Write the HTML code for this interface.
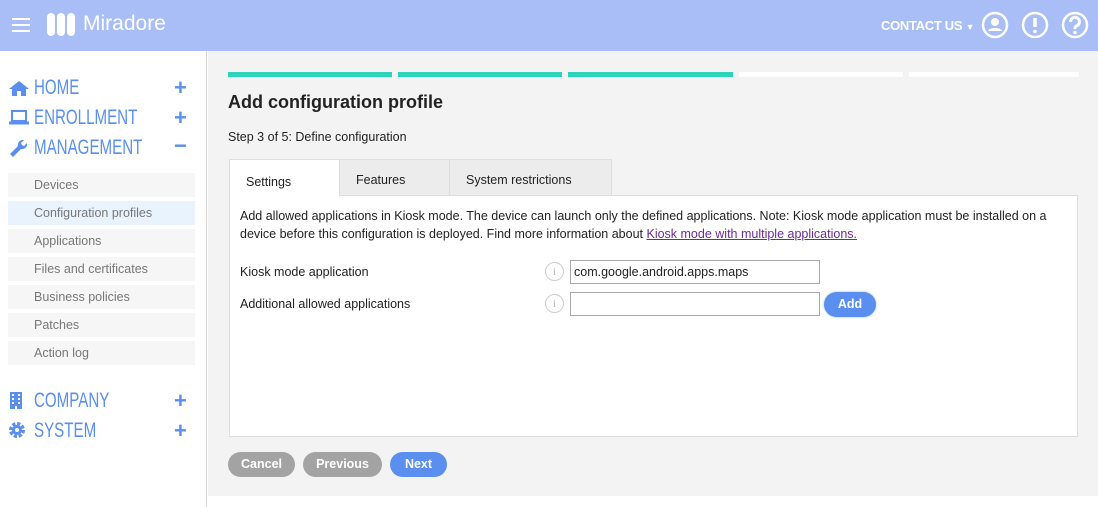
<!DOCTYPE html>
<html><head><meta charset="utf-8"><style>
*{box-sizing:border-box;margin:0;padding:0}
body{width:1098px;height:507px;overflow:hidden;background:#fff;font-family:"Liberation Sans",sans-serif;position:relative;color:#222}
.hdr{position:absolute;left:0;top:0;width:1098px;height:51px;background:#a9bef6}
.side{position:absolute;left:0;top:51px;width:207px;height:456px;background:#fff;border-right:1px solid #d8d8d8}
.main{position:absolute;left:208px;top:51px;width:890px;height:445px;background:#f3f3f3}
.nav{position:absolute;left:34px;font-size:21px;color:#5a8ff0;transform:scaleX(.72);transform-origin:left;font-family:"Liberation Sans",sans-serif;line-height:24px}
.ic{position:absolute;left:9px}
.pl{position:absolute;left:174px;font-size:22px;color:#5a8ff0;font-weight:bold;line-height:20px}
.sub{position:absolute;left:8px;width:187px;height:24px;background:#f6f6f6;font-size:12.5px;color:#777;padding:5px 0 0 26px}
.bar{position:absolute;top:72px;height:5px}
.tab{position:absolute;top:159px;height:37px;background:#ececec;border:1px solid #ddd;font-size:12.5px;padding:13px 0 0 16px}
.btn{position:absolute;top:452px;height:25px;border-radius:13px;color:#fff;font-weight:bold;font-size:12.5px;text-align:center;line-height:25px}
.inp{position:absolute;left:570px;width:250px;height:24px;border:1px solid #aaa;background:#fff;font-size:12.5px;padding:4px 3px}
.info{position:absolute;left:545px;width:19px;height:19px;border:1px solid #ccc;border-radius:50%;color:#bbb;font-size:12px;text-align:center;line-height:17px;font-family:"Liberation Serif",serif}
</style></head><body>
<div class="hdr">
 <div style="position:absolute;left:12px;top:18px;width:18px;height:2px;background:#fff;box-shadow:0 6px 0 #fff,0 12px 0 #fff"></div>
 <div style="position:absolute;left:47px;top:13px;width:8px;height:23px;border-radius:4px;background:#fff"></div>
 <div style="position:absolute;left:57px;top:13px;width:8px;height:23px;border-radius:4px;background:#fff"></div>
 <div style="position:absolute;left:67px;top:13px;width:8px;height:23px;border-radius:4px;background:#fff"></div>
 <div style="position:absolute;left:83px;top:12px;font-size:21px;color:#fff">Miradore</div>
 <div style="position:absolute;left:881px;top:18px;font-size:13px;color:#fff;font-weight:bold;letter-spacing:-.3px">CONTACT US <span style="font-size:9px">▼</span></div>
 <svg style="position:absolute;left:981px;top:11px" width="110" height="28" fill="none" stroke="#fff" stroke-width="2.5">
  <circle cx="14" cy="14" r="12"/><circle cx="14" cy="11" r="4" fill="#fff" stroke="none"/><path d="M7 20c1-4 13-4 14 0z" fill="#fff" stroke="none"/>
  <circle cx="54" cy="14" r="12"/><path d="M54 7v9" stroke-width="3.5"/><circle cx="54" cy="20.5" r="1.8" fill="#fff" stroke="none"/>
  <circle cx="94" cy="14" r="12"/><path d="M89.5 11a4.5 4.5 0 1 1 6 4c-1.5 .7-1.5 1.5-1.5 3" stroke-width="3"/><circle cx="94" cy="21.5" r="1.8" fill="#fff" stroke="none"/>
 </svg>
</div>
<div class="side">
 <svg class="ic" style="top:29px" width="20" height="16" fill="#5a8ff0"><path d="M10 1L0 9h3v7h5v-5h4v5h5V9h3z"/></svg>
 <div class="nav" style="top:25px">HOME</div><div class="pl" style="top:27px">+</div>
 <svg class="ic" style="top:58px" width="20" height="16" fill="none" stroke="#5a8ff0" stroke-width="2"><rect x="3" y="2" width="14" height="10"/><path d="M0 14h20" stroke-width="3"/></svg>
 <div class="nav" style="top:55px">ENROLLMENT</div><div class="pl" style="top:57px">+</div>
 <svg class="ic" style="top:88px" width="18" height="18" fill="#5a8ff0"><path d="M1 15l8-8a5 5 0 0 1 6-6l-3 3 1 2 2 1 3-3a5 5 0 0 1-6 6l-8 8z"/></svg>
 <div class="nav" style="top:85px">MANAGEMENT</div><div class="pl" style="top:85px">−</div>
 <div class="sub" style="top:122px">Devices</div>
 <div class="sub" style="top:150px;background:#e9f3fd">Configuration profiles</div>
 <div class="sub" style="top:178px">Applications</div>
 <div class="sub" style="top:206px">Files and certificates</div>
 <div class="sub" style="top:234px">Business policies</div>
 <div class="sub" style="top:262px">Patches</div>
 <div class="sub" style="top:290px">Action log</div>
 <svg class="ic" style="top:341px" width="14" height="17" fill="#5a8ff0"><path d="M1 0h12v17H8v-3H6v3H1z"/><g fill="#fff"><rect x="3" y="2" width="2" height="2"/><rect x="9" y="2" width="2" height="2"/><rect x="3" y="6" width="2" height="2"/><rect x="9" y="6" width="2" height="2"/><rect x="3" y="10" width="2" height="2"/><rect x="9" y="10" width="2" height="2"/></g></svg>
 <div class="nav" style="top:338px">COMPANY</div><div class="pl" style="top:340px">+</div>
 <svg class="ic" style="top:371px" width="16" height="16"><circle cx="8" cy="8" r="6" fill="none" stroke="#5a8ff0" stroke-width="4" stroke-dasharray="3 1.7"/><circle cx="8" cy="8" r="5" fill="#5a8ff0"/><circle cx="8" cy="8" r="2" fill="#fff"/></svg>
 <div class="nav" style="top:368px">SYSTEM</div><div class="pl" style="top:370px">+</div>
</div>
<div class="main"></div>
<div class="bar" style="left:228px;width:164px;background:#2dd4b9"></div>
<div class="bar" style="left:398px;width:164px;background:#2dd4b9"></div>
<div class="bar" style="left:568px;width:165px;background:#2dd4b9"></div>
<div class="bar" style="left:739px;width:164px;background:#fff"></div>
<div class="bar" style="left:909px;width:170px;background:#fff"></div>
<div style="position:absolute;left:228px;top:92px;font-size:18px;font-weight:bold">Add configuration profile</div>
<div style="position:absolute;left:228px;top:130px;font-size:12.5px">Step 3 of 5: Define configuration</div>
<div style="position:absolute;left:229px;top:195px;width:849px;height:242px;background:#fff;border:1px solid #ddd"></div>
<div class="tab" style="left:339px;width:111px">Features</div>
<div class="tab" style="left:449px;width:163px">System restrictions</div>
<div class="tab" style="left:229px;width:111px;background:#fff;border-bottom:none;height:38px;padding-top:15px">Settings</div>
<div style="position:absolute;left:240px;top:207px;width:830px;font-size:12.5px;line-height:18px">Add allowed applications in Kiosk mode. The device can launch only the defined applications. Note: Kiosk mode application must be installed on a device before this configuration is deployed. Find more information about <u style="color:#6a2a9a">Kiosk mode with multiple applications.</u></div>
<div style="position:absolute;left:240px;top:265px;font-size:12.5px">Kiosk mode application</div>
<div style="position:absolute;left:240px;top:297px;font-size:12.5px">Additional allowed applications</div>
<div class="info" style="top:262px">i</div><div class="info" style="top:294px">i</div>
<div class="inp" style="top:260px">com.google.android.apps.maps</div>
<div class="inp" style="top:292px"></div>
<div style="position:absolute;left:824px;top:292px;width:52px;height:25px;border-radius:13px;background:#5a8ff0;color:#fff;font-weight:bold;font-size:12.5px;text-align:center;line-height:25px;box-shadow:0 0 2px #9bb">Add</div>
<div class="btn" style="left:228px;width:67px;background:#a3a3a3">Cancel</div>
<div class="btn" style="left:303px;width:79px;background:#a3a3a3">Previous</div>
<div class="btn" style="left:390px;width:57px;background:#5a8ff0">Next</div>
</body></html>
